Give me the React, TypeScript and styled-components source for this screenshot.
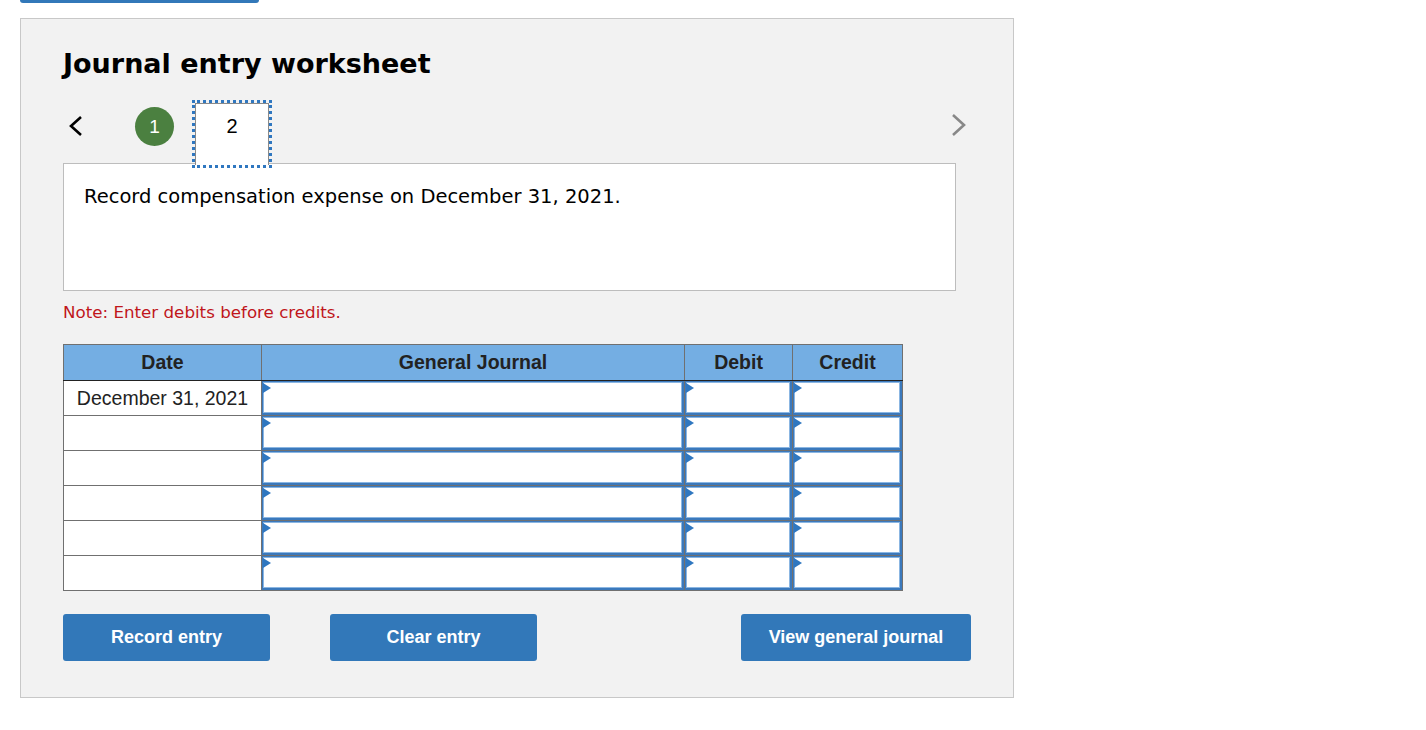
import React from "react";
import styled, { createGlobalStyle } from "styled-components";

const Global = createGlobalStyle`
  html, body { margin: 0; padding: 0; background: #fff; }
  body { font-family: "DejaVu Sans", Verdana, sans-serif; }
`;

const Page = styled.div`
  padding: 0 20px;
`;

const TopBar = styled.div`
  width: 239px;
  height: 3px;
  background: #3278b9;
  border-radius: 0 0 4px 4px;
  margin-bottom: 15px;
`;

const Panel = styled.div`
  width: 994px;
  box-sizing: border-box;
  background: #f2f2f2;
  border: 1px solid #c8c8c8;
  padding: 30px 0 36px 42px;
`;

const Heading = styled.h1`
  margin: 0;
  font-family: "DejaVu Sans", Verdana, sans-serif;
  font-weight: bold;
  font-size: 27px;
  line-height: 30px;
  color: #000;
`;

const NavRow = styled.div`
  display: flex;
  align-items: flex-start;
  width: 904px;
  margin-top: 24px;
  position: relative;
  z-index: 1;
  margin-bottom: -2px;
`;

const Chevron = styled.svg<{ $right?: boolean }>`
  display: block;
  flex-shrink: 0;
  margin-top: ${(p) => (p.$right ? "10px" : "12px")};
  margin-left: ${(p) => (p.$right ? "auto" : "5px")};
`;

const StepDone = styled.div`
  flex-shrink: 0;
  width: 39px;
  height: 39px;
  border-radius: 50%;
  background: #4b8040;
  color: #fff;
  font-family: "Liberation Sans", Arial, sans-serif;
  font-size: 19px;
  display: flex;
  align-items: center;
  justify-content: center;
  margin-left: 51px;
  margin-top: 4px;
`;

const StepTab = styled.div`
  flex-shrink: 0;
  width: 74px;
  height: 62px;
  box-sizing: border-box;
  margin-left: 21px;
  background: #fff;
  border: 1px solid #8a8a8a;
  border-bottom: none;
  outline: 3px dotted #2f77c0;
  outline-offset: 0;
  font-family: "Liberation Sans", Arial, sans-serif;
  font-size: 20px;
  color: #000;
  display: flex;
  justify-content: center;
  padding-top: 11px;
`;

const Prompt = styled.div`
  width: 893px;
  height: 128px;
  box-sizing: border-box;
  background: #fff;
  border: 1px solid #bdbdbd;
  padding: 21px 20px;
  font-size: 19.5px;
  line-height: 24px;
  color: #000;
`;

const Note = styled.div`
  margin-top: 11px;
  font-size: 16.7px;
  line-height: 20px;
  color: #c0161b;
`;

const Table = styled.table`
  margin-top: 22px;
  border-collapse: collapse;
  table-layout: fixed;
  width: 839px;
  font-family: "Liberation Sans", Arial, sans-serif;
  font-size: 19.5px;
  color: #222;
`;

const Th = styled.th`
  background: #74aee3;
  height: 35px;
  padding: 0;
  font-weight: bold;
  border: 1px solid #707070;
  border-bottom: 1px solid #222;
  border-left: 1px solid #222;
  &:first-child { border-left: 1px solid #707070; }
  text-align: center;
`;

const DateCell = styled.td`
  height: 34px;
  padding: 0;
  background: #fff;
  border: 1px solid #707070;
  text-align: center;
  box-sizing: border-box;
`;

const InputCell = styled.td`
  height: 34px;
  padding: 0;
  border: 1px solid #707070;
  position: relative;
  background: #fff;
  box-sizing: border-box;
  &::before {
    content: "";
    position: absolute;
    left: 1px;
    top: 2px;
    border-left: 8px solid #2f77c0;
    border-top: 5px solid transparent;
    border-bottom: 5px solid transparent;
    z-index: 1;
  }
`;

const Field = styled.div`
  height: 34px;
  box-sizing: border-box;
  border: 1px solid #3b79bc;
  border-bottom-width: 2px;
  border-right-width: 2px;
  box-shadow: inset 0 0 0 1px #8bb6e2;
  background: #fff;
`;

const Actions = styled.div`
  display: flex;
  margin-top: 23px;
`;

const Button = styled.button<{ $w: number; $ml: number }>`
  width: ${(p) => p.$w}px;
  margin-left: ${(p) => p.$ml}px;
  height: 47px;
  border: none;
  border-radius: 3px;
  background: #3278b9;
  color: #fff;
  font-family: "Liberation Sans", Arial, sans-serif;
  font-weight: bold;
  font-size: 18px;
  cursor: pointer;
`;

const rows = ["December 31, 2021", "", "", "", "", ""];

export default function App() {
  return (
    <Page>
      <Global />
      <TopBar />
      <Panel>
        <Heading>Journal entry worksheet</Heading>
        <NavRow>
          <Chevron width="16" height="22" viewBox="0 0 16 22">
            <polyline points="13,2 3,11 13,20" fill="none" stroke="#000" strokeWidth="2.6" />
          </Chevron>
          <StepDone>1</StepDone>
          <StepTab>2</StepTab>
          <Chevron $right width="16" height="24" viewBox="0 0 16 24">
            <polyline points="2,2 13,12 2,22" fill="none" stroke="#888" strokeWidth="2.6" />
          </Chevron>
        </NavRow>
        <Prompt>Record compensation expense on December 31, 2021.</Prompt>
        <Note>Note: Enter debits before credits.</Note>
        <Table>
          <colgroup>
            <col style={{ width: 198 }} />
            <col style={{ width: 423 }} />
            <col style={{ width: 108 }} />
            <col style={{ width: 110 }} />
          </colgroup>
          <thead>
            <tr>
              <Th>Date</Th>
              <Th>General Journal</Th>
              <Th>Debit</Th>
              <Th>Credit</Th>
            </tr>
          </thead>
          <tbody>
            {rows.map((d, i) => (
              <tr key={i}>
                <DateCell>{d}</DateCell>
                <InputCell><Field /></InputCell>
                <InputCell><Field /></InputCell>
                <InputCell><Field /></InputCell>
              </tr>
            ))}
          </tbody>
        </Table>
        <Actions>
          <Button $w={207} $ml={0}>Record entry</Button>
          <Button $w={207} $ml={60}>Clear entry</Button>
          <Button $w={230} $ml={204}>View general journal</Button>
        </Actions>
      </Panel>
    </Page>
  );
}
